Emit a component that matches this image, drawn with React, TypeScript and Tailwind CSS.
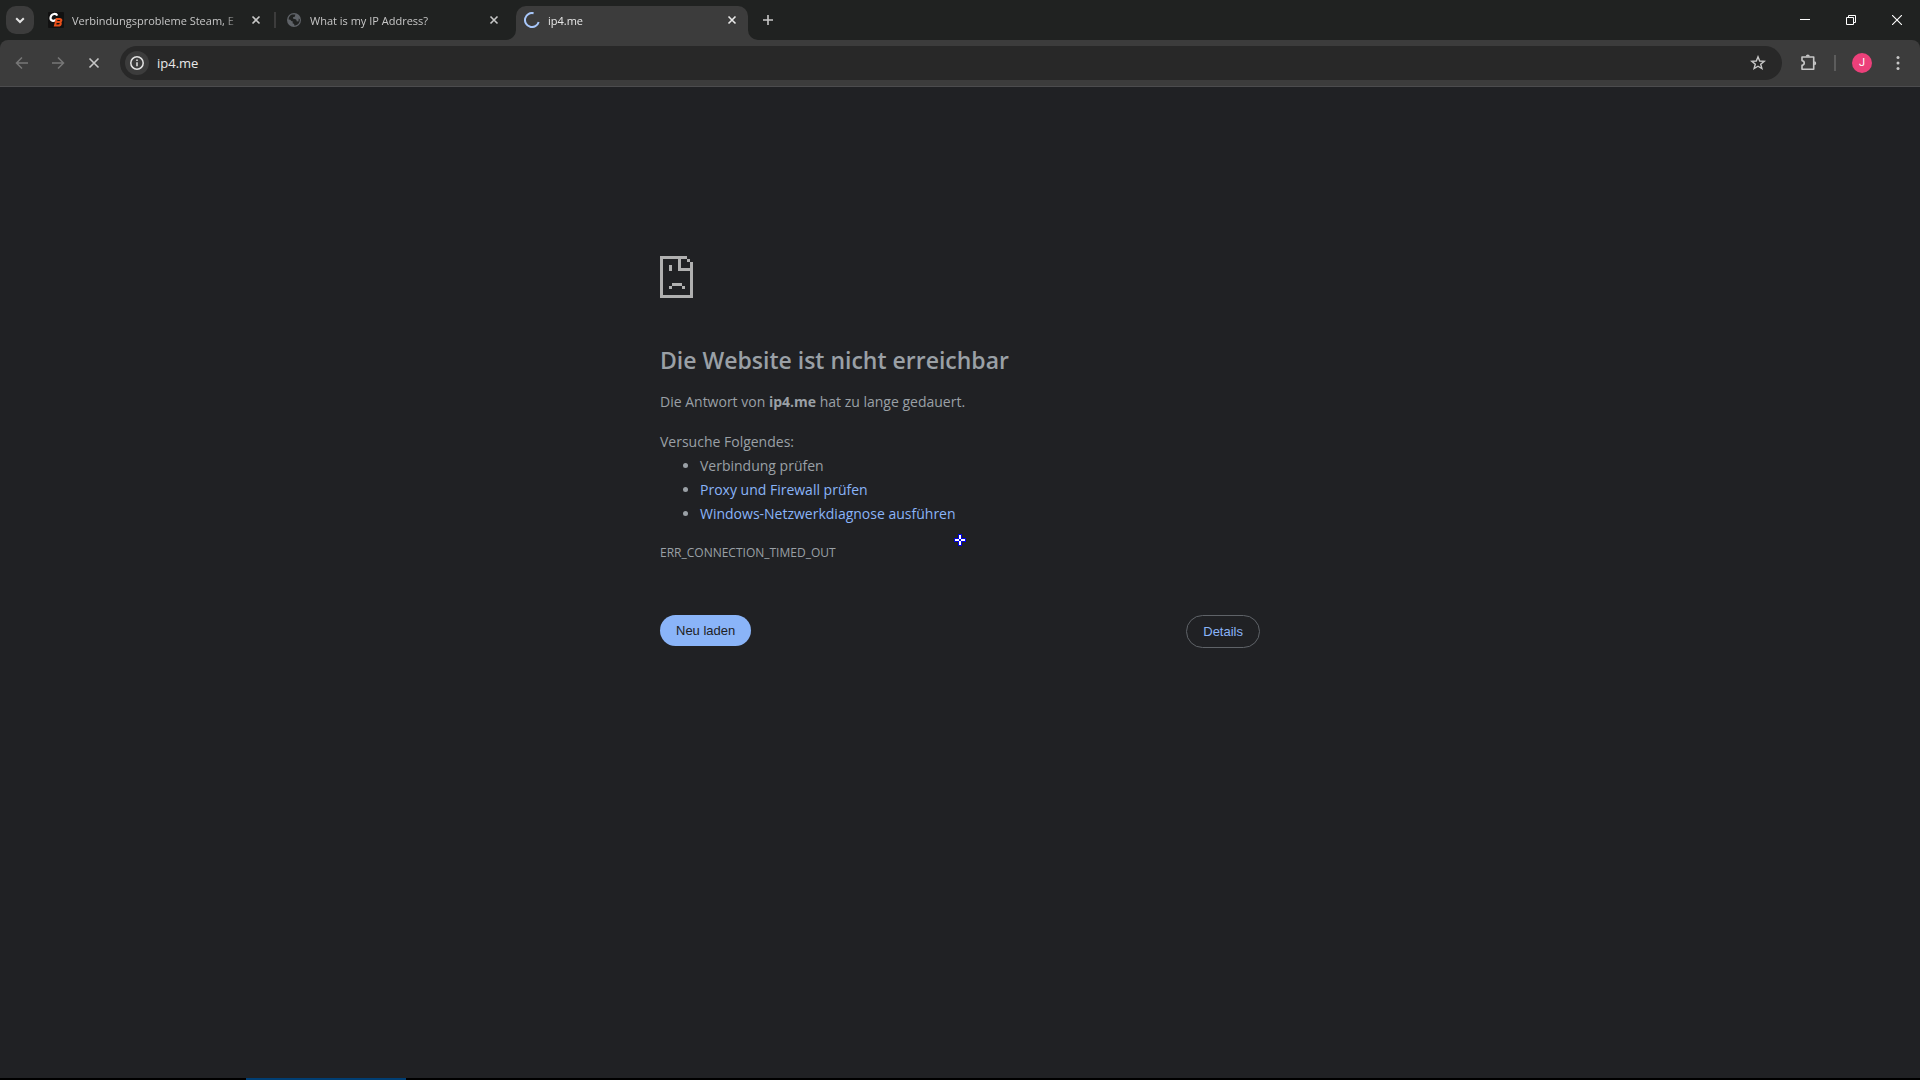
import type { ReactNode } from "react";

type Tab = {
  title: string;
  icon: ReactNode;
  active?: boolean;
};

const CloseIcon = () => (
  <svg viewBox="0 0 16 16" className="w-4 h-4" fill="none" stroke="currentColor" strokeWidth="1.6">
    <path d="M4.5 4.5l7 7M11.5 4.5l-7 7" />
  </svg>
);

const ForumIcon = () => (
  <svg viewBox="0 0 16 16" className="w-4 h-4 shrink-0">
    <rect width="16" height="16" rx="1" fill="#111111" />
    <path d="M9.2 3.6C8.4 1.4 3.6 1 2.6 5.2 1.9 9 6 9.8 8 7.6" fill="none" stroke="#ffffff" strokeWidth="2.2" />
    <path
      d="M8.6 7h3c2.6 0 2.2 3-.4 3H8.4h2.6c2.8 0 2.2 3.6-.8 3.6H7z"
      fill="none"
      stroke="#e8501a"
      strokeWidth="2"
    />
  </svg>
);

const GlobeIcon = () => (
  <svg viewBox="0 0 16 16" className="w-4 h-4 shrink-0">
    <circle cx="8" cy="8" r="7" fill="#5f6368" />
    <path
      d="M2.6 7.6c0-2.4 1.3-4.2 3.4-5 1.4-.4 2.4-.2 3.4.2L9 4.4 7 5.2l.2 1.6 2.2.4c1 .2 1.4 1 1.2 2l1.8.2c.4-1 .4-2 .2-2.8l1.2.6c.2 3.4-2 6.2-5.6 6.4V12L6.6 11.2l.2-1.8-1.6-.4-.8-1.2z"
      fill="#202221"
    />
    <path d="M9.6 3l2.6 2-1.4 1.2-1.6-.8z" fill="#5f6368" />
  </svg>
);

const Spinner = () => (
  <svg viewBox="0 0 16 16" className="w-4 h-4 shrink-0" fill="none" stroke="#a8c7fa" strokeWidth="2">
    <path d="M9.6 1.2A7 7 0 1 0 14.7 10" />
  </svg>
);

const tabs: Tab[] = [
  { title: "Verbindungsprobleme Steam, E", icon: <ForumIcon /> },
  { title: "What is my IP Address?", icon: <GlobeIcon /> },
  { title: "ip4.me", icon: <Spinner />, active: true },
];

function TabItem({ tab }: { tab: Tab }) {
  return (
    <div
      role="tab"
      aria-selected={!!tab.active}
      className={`relative flex items-center gap-2 w-[232px] px-2 ${
        tab.active ? "h-[34px] pb-1.5 self-end rounded-t-[10px] bg-[#3c3c3c] text-[#e8e8e8]" : "h-10 text-[#c7c7c7]"
      }`}
    >
      {tab.active && (
        <>
          <svg viewBox="0 0 10 10" className="absolute bottom-0 -left-2.5 w-2.5 h-2.5" fill="#3c3c3c">
            <path d="M10 0v10H0A10 10 0 0 0 10 0z" />
          </svg>
          <svg viewBox="0 0 10 10" className="absolute bottom-0 -right-2.5 w-2.5 h-2.5" fill="#3c3c3c">
            <path d="M0 0v10h10A10 10 0 0 1 0 0z" />
          </svg>
        </>
      )}
      {tab.icon}
      <span className="w-[168px] pt-0.5 overflow-hidden whitespace-nowrap text-[11px] leading-4 [mask-image:linear-gradient(to_right,#000_152px,transparent_168px)]">
        {tab.title}
      </span>
      <button aria-label="Tab schließen" className="shrink-0">
        <CloseIcon />
      </button>
    </div>
  );
}

function TabStrip() {
  return (
    <div className="flex items-center h-10 pl-1.5 bg-[#202221]">
      <button
        aria-label="Tabs durchsuchen"
        className="flex items-center justify-center w-7 h-7 mr-1.5 rounded-[10px] bg-[#3c3c3c] text-[#e3e3e3]"
      >
        <svg viewBox="0 0 16 16" className="w-4 h-4" fill="none" stroke="currentColor" strokeWidth="2">
          <path d="M4.2 6.2L8 10l3.8-3.8" />
        </svg>
      </button>
      <div role="tablist" className="flex items-center h-10">
        <TabItem tab={tabs[0]} />
        <span className="w-0.5 h-4 mx-0.5 bg-[#3c3c3c]" />
        <TabItem tab={tabs[1]} />
        <span className="w-1.5" />
        <TabItem tab={tabs[2]} />
      </div>
      <button aria-label="Neuer Tab" className="flex items-center justify-center w-7 h-7 ml-1.5 text-[#c7c7c7]">
        <svg viewBox="0 0 16 16" className="w-4 h-4" fill="none" stroke="currentColor" strokeWidth="1.6">
          <path d="M8 3v10M3 8h10" />
        </svg>
      </button>
      <div className="flex ml-auto text-white">
        <button aria-label="Minimieren" className="flex items-center justify-center w-[46px] h-10">
          <svg viewBox="0 0 10 10" className="w-2.5 h-2.5" fill="currentColor">
            <path d="M0 4h10v1H0z" />
          </svg>
        </button>
        <button aria-label="Verkleinern" className="flex items-center justify-center w-[46px] h-10">
          <svg viewBox="0 0 10 10" className="w-2.5 h-2.5" fill="none" stroke="currentColor">
            <path d="M.5 2.5h7v7h-7zM2.5 2.5v-2h7v7h-2" />
          </svg>
        </button>
        <button aria-label="Schließen" className="flex items-center justify-center w-[46px] h-10">
          <svg viewBox="0 0 10 10" className="w-2.5 h-2.5" fill="none" stroke="currentColor" strokeWidth="1.1">
            <path d="M0 0l10 10M10 0L0 10" />
          </svg>
        </button>
      </div>
    </div>
  );
}

function Toolbar() {
  return (
    <div className="bg-[#202221]">
      <div className="flex items-center h-[47px] px-2 rounded-t-lg bg-[#3c3c3c] border-b border-[#4c4c4e] text-[#c7c7c7]">
        <button aria-label="Zurück" disabled className="flex items-center justify-center w-7 h-7 text-[#777777]">
          <svg viewBox="0 0 16 16" className="w-4 h-4" fill="none" stroke="currentColor" strokeWidth="1.5">
            <path d="M14 8H3M8 2.5L2.5 8 8 13.5" />
          </svg>
        </button>
        <button aria-label="Vorwärts" disabled className="flex items-center justify-center w-7 h-7 ml-2 text-[#777777]">
          <svg viewBox="0 0 16 16" className="w-4 h-4" fill="none" stroke="currentColor" strokeWidth="1.5">
            <path d="M2 8h11M8 2.5L13.5 8 8 13.5" />
          </svg>
        </button>
        <button aria-label="Laden abbrechen" className="flex items-center justify-center w-7 h-7 ml-2">
          <svg viewBox="0 0 16 16" className="w-4 h-4" fill="none" stroke="currentColor" strokeWidth="1.6">
            <path d="M3.5 3.5l9 9M12.5 3.5l-9 9" />
          </svg>
        </button>
        <div className="flex flex-1 items-center h-[34px] ml-3 pl-[5px] pr-4 rounded-full bg-[#282828]">
          <button
            aria-label="Websiteinformationen"
            className="flex items-center justify-center w-6 h-6 rounded-full bg-[#3c3c3c] text-[#e3e3e3]"
          >
            <svg viewBox="0 0 16 16" className="w-4 h-4" fill="none" stroke="currentColor" strokeWidth="1.5">
              <circle cx="8" cy="8" r="6.2" />
              <path d="M8 7.2v4M8 4.6v1.5" />
            </svg>
          </button>
          <input
            aria-label="Adresszeile"
            defaultValue="ip4.me"
            className="flex-1 ml-2 bg-transparent text-[13px] leading-5 text-[#e8e8e8] outline-none"
          />
          <button aria-label="Lesezeichen hinzufügen">
            <svg viewBox="0 0 16 16" className="w-4 h-4" fill="none" stroke="currentColor" strokeWidth="1.4">
              <path d="M8 1.8l1.7 4.2 4.5.3-3.5 2.9 1.2 4.4L8 11.2l-3.9 2.4 1.2-4.4L1.8 6.3l4.5-.3z" />
            </svg>
          </button>
        </div>
        <button aria-label="Erweiterungen" className="flex items-center justify-center w-7 h-7 ml-3">
          <svg viewBox="0 0 18 18" className="w-[18px] h-[18px]" fill="none" stroke="currentColor" strokeWidth="1.6">
            <path d="M3 3h11.7v12.2H3v-3.8c3-.6 3-4.2 0-4.8z" strokeLinejoin="round" />
            <path d="M6.8 2.6a2 2 0 0 1 4 0zM15.2 7.2a2 2 0 0 1 0 4z" fill="currentColor" stroke="none" />
          </svg>
        </button>
        <span className="w-0.5 h-4 ml-3 bg-[#5c5c5c]" />
        <button
          aria-label="Profil"
          className="flex items-center justify-center w-5 h-5 ml-4 rounded-full bg-[#ec407a] font-['Roboto',sans-serif] text-[11px] leading-5 text-white"
        >
          J
        </button>
        <button aria-label="Menü" className="flex items-center justify-center w-7 h-7 ml-3">
          <svg viewBox="0 0 16 16" className="w-4 h-4" fill="currentColor">
            <circle cx="8" cy="2.5" r="1.5" />
            <circle cx="8" cy="8" r="1.5" />
            <circle cx="8" cy="13.5" r="1.5" />
          </svg>
        </button>
      </div>
    </div>
  );
}

const SadPageIcon = () => (
  <svg viewBox="0 0 33 42" className="w-[33px] h-[42px]" fill="#b0b0b0" shapeRendering="crispEdges">
    <path d="M0 0h27v3h-6v9h9V6h3v36H0zM3 3v36h27V15H18V3z" fillRule="evenodd" />
    <path d="M27 3h3v3h-3zM9 9h3v6H9zM12 27h10v3H12zM9 30h3v3H9zM22 30h3v3h-3z" />
  </svg>
);

function ErrorPage() {
  return (
    <main className="flex-1 w-full max-w-[600px] mx-auto pt-[169px] text-sm leading-6 text-[#9aa0a6]">
      <SadPageIcon />
      <h1 className="mt-12 text-[23px] leading-7 font-semibold">Die Website ist nicht erreichbar</h1>
      <p className="mt-4">
        Die Antwort von <strong className="font-bold">ip4.me</strong> hat zu lange gedauert.
      </p>
      <p className="mt-4">Versuche Folgendes:</p>
      <ul className="pl-10 list-disc">
        <li>Verbindung prüfen</li>
        <li>
          <a href="#proxy" className="text-[#8ab4f8]">
            Proxy und Firewall prüfen
          </a>
        </li>
        <li>
          <a href="#diagnose" className="text-[#8ab4f8]">
            Windows-Netzwerkdiagnose ausführen
          </a>
        </li>
      </ul>
      <p className="mt-4 text-xs leading-[22px]">ERR_CONNECTION_TIMED_OUT</p>
      <div className="flex items-start justify-between mt-[51px] font-['Liberation_Sans',Arial,sans-serif] text-[13px] leading-[15px]">
        <button className="px-4 py-2 rounded-full bg-[#8ab4f8] text-[#202124]">Neu laden</button>
        <button className="px-4 py-2 rounded-full border border-[#5f6368] text-[#8ab4f8]">Details</button>
      </div>
    </main>
  );
}

export default function App() {
  return (
    <div className="relative flex flex-col min-h-screen bg-[#202124] font-['Open_Sans','Noto_Sans',sans-serif]">
      <TabStrip />
      <Toolbar />
      <ErrorPage />

      {/* Taskbar edge */}
      <div className="h-0.5 bg-black">
        <div className="w-40 h-0.5 ml-[246px] bg-[#003e73]" />
      </div>

      {/* Crosshair cursor */}
      <svg
        viewBox="0 0 12 12"
        className="absolute top-1/2 left-1/2 w-3 h-3 -translate-x-1/2 -translate-y-1/2 pointer-events-none"
        shapeRendering="crispEdges"
      >
        <path d="M4 0h4v4h4v4H8v4H4V8H0V4h4z" fill="#0000e0" />
        <path d="M5 1h2v10H5zM1 5h10v2H1z" fill="#ffffff" />
        <path d="M5 5h2v2H5z" fill="#0000e0" />
      </svg>
    </div>
  );
}
